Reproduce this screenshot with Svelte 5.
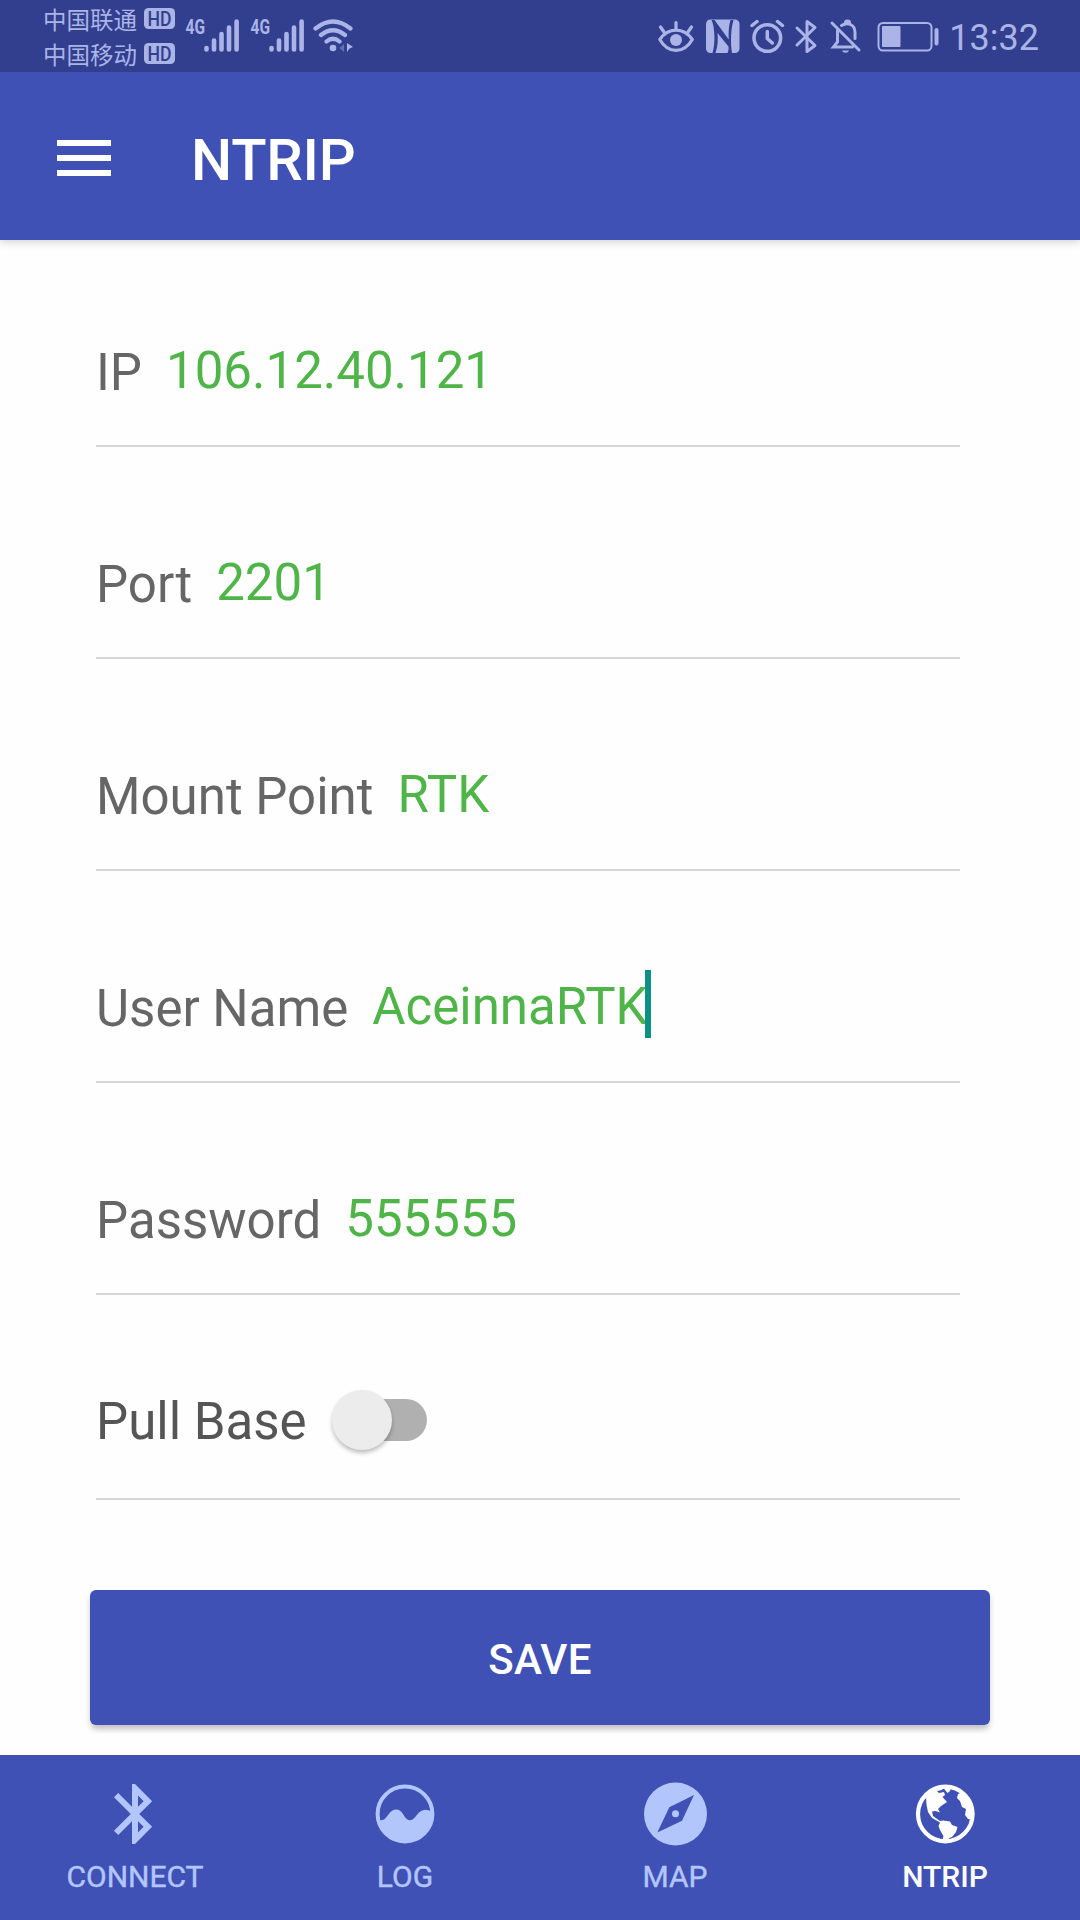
<script>
  const fields = [
    { label: 'IP', value: '106.12.40.121' },
    { label: 'Port', value: '2201' },
    { label: 'Mount Point', value: 'RTK' },
    { label: 'User Name', value: 'AceinnaRTK', focused: true },
    { label: 'Password', value: '555555' }
  ];
  const carriers = ['中国联通', '中国移动'];
  const tabs = ['CONNECT', 'LOG', 'MAP', 'NTRIP'];
  let active = $state('NTRIP');
</script>

<div class="screen">
  <div class="status">
    <div class="carriers">
      {#each carriers as name}
        <div class="carrier">
          <span>{name}</span>
          <svg class="hd" viewBox="0 0 31 21">
            <rect width="31" height="21" rx="4.5" fill="#aab4e6" />
            <text x="3.5" y="17.5" textLength="24" lengthAdjust="spacingAndGlyphs">HD</text>
          </svg>
        </div>
      {/each}
    </div>
    {#each [0, 1] as n}
      <svg class="signal" viewBox="185 16 56 40">
        <text x="185.5" y="34" textLength="19.5" lengthAdjust="spacingAndGlyphs">4G</text>
        <g stroke="#aab4e6" stroke-width="4.6" stroke-linecap="round">
          <path d="M206.5 48v1.5M214 40.5v9M221.5 34v15.5M229 27.5v22M236.6 21.5v28" />
        </g>
      </svg>
    {/each}
    <svg class="wifi" viewBox="311 16 44 40" fill="none" stroke="#aab4e6" stroke-width="4.2" stroke-linecap="round">
      <path d="M315.5 28.5Q333 14.5 350.5 28.5M321 35Q333 25.5 345 35M326.5 41.5Q333 36 339.5 41.5" />
      <circle cx="333" cy="48" r="3.3" fill="#aab4e6" stroke="none" />
      <path d="M344 44v8l-4.5-4z" fill="#6470b4" stroke="none" />
      <path d="M347 43l6 4-3.5 1.5-2.500 3.5z" fill="#aab4e6" stroke="none" />
    </svg>

    <div class="system">
      <svg class="eye" viewBox="657 16 38 40" fill="none" stroke="#aab4e6" stroke-width="3.2" stroke-linecap="round">
        <path d="M659.8 39.5C668 27 684 27 692.3 39.5C684 54 668 54 659.8 39.5Z" stroke-linejoin="round" />
        <path d="M676 22.500v6M660.5 27l3.5 5M691.5 27l-3.5 5" />
        <circle cx="676" cy="40" r="6" fill="#aab4e6" stroke="none" />
      </svg>
      <svg class="nfc" viewBox="704 16 38 40">
        <rect x="706" y="19.5" width="33.5" height="33.5" rx="4.5" fill="#aab4e6" />
        <path d="M711.500 20C715 27 715.500 44 712.500 53H715.500C718 46 718 39 717.500 33L728.500 46.500C728.800 49 728.500 51 727.500 53H732C730.500 44 730.500 30 733.500 20H730.500C728.500 26 728.500 33 728.700 39.500L714.500 20Z" fill="#323f8f" />
      </svg>
      <svg class="alarm" viewBox="748 16 38 40" fill="none" stroke="#aab4e6" stroke-width="3.5" stroke-linecap="round">
        <circle cx="767.3" cy="38" r="13.3" />
        <path d="M767.3 31.5v7l5 4.5M752 25.5l5-4M782.5 25.5l-5-4" />
      </svg>
      <svg class="bt" viewBox="793 16 28 40" fill="none" stroke="#aab4e6" stroke-width="3" stroke-linejoin="round">
        <path d="M797 28l18 17.500-8 6V21.500l8 6-18 17.500" stroke-linecap="round" />
      </svg>
      <svg class="bell" viewBox="829 16 34 40" fill="none" stroke="#aab4e6" stroke-width="3" stroke-linecap="round">
        <path d="M832 23l27 27M837.5 30v12l-4 5h19M841.5 25.500c6-4 13.500-1 13.500 7v6M845.500 22.500c0-2 4-2 4 0" />
        <path d="M842 50.500h7c-1.200 3-5.800 3-7 0z" fill="#aab4e6" stroke="none" />
      </svg>
      <svg class="battery" viewBox="876 16 64 40">
        <rect x="878.5" y="23" width="53" height="27.5" rx="4.5" fill="none" stroke="#aab4e6" stroke-width="2" />
        <rect x="882" y="26" width="18.5" height="21" rx="1" fill="#aab4e6" />
        <rect x="934.5" y="28" width="4" height="17.5" rx="2" fill="#aab4e6" />
      </svg>
      <span class="time">13:32</span>
    </div>
  </div>

  <header>
    <button class="menu" aria-label="Menu"><i></i><i></i><i></i></button>
    <h1>NTRIP</h1>
  </header>

  <main>
    {#each fields as f}
      <div class="row">
        <span class="label">{f.label}</span>
        <span class="value">{f.value}</span>
        {#if f.focused}<i class="caret"></i>{/if}
      </div>
    {/each}
    <div class="row toggle">
      <span class="label">Pull Base</span>
      <span class="switch"><i></i></span>
    </div>
    <button class="save">SAVE</button>
  </main>

  <nav>
    {#each tabs as tab}
      <button class:active={tab === active} onclick={() => (active = tab)}>
        <svg viewBox="0 0 72 72" fill="currentColor">
          {#if tab === 'CONNECT'}
            <path transform="scale(3)" d="M17.71 7.71L12 2h-1v7.59L6.41 5 5 6.41 10.59 12 5 17.59 6.41 19 11 14.41V22h1l5.71-5.71-4.3-4.29 4.3-4.29zM13 5.83l1.88 1.88L13 9.59V5.83zm1.88 10.46L13 18.17v-3.76l1.88 1.88z" />
          {:else if tab === 'LOG'}
            <circle cx="36" cy="36" r="27.4" fill="none" stroke="currentColor" stroke-width="4" />
            <path d="M9 41C14 44 16 41 19 37C24 30 30 30 34 36C38 43 42 45 47 38C52 31 57 30 63 34C63 51 51 64 36 64C21 64 9 54 9 41Z" />
          {:else if tab === 'MAP'}
            <path fill-rule="evenodd" d="M36.500 4.500a31.500 31.500 0 1 0 0 63a31.500 31.500 0 1 0 0-63zM55 17L43 42.700L18.300 54.500L30.300 29.300Z" />
            <circle cx="36.500" cy="35.800" r="3.5" />
          {:else}
            <circle cx="36.300" cy="36" r="27.300" fill="none" stroke="currentColor" stroke-width="4.200" />
            <path d="M17 19L25 12L34 9.500L33 12L28 13L30 15L35 14L36 17L33.500 19L38 24L32 28L29 31L31 34.500L26.500 33L23 33.500L24 38L31 43L34 42.500L41 43.500L43 47L48.500 49L47 54L43 59L40 60L39.500 64H33L34.500 58L31 52L29.500 48L31 44.500L23 40L19 34L17.500 27Z" />
            <path d="M34 9L42 9.500L41 13L38.500 15L36 12Z" />
            <path d="M49 16L53 14.500C61 21 65 30 63.500 42L59 41L56 37L57 31L53 29L51 23L48 20Z" />
          {/if}
        </svg>
        <span>{tab}</span>
      </button>
    {/each}
  </nav>
</div>

<style>
  :global(body) {
    background: #fff;
  }
  .screen {
    width: 1080px;
    height: 1920px;
    display: flex;
    flex-direction: column;
    overflow: hidden;
    background: #fefefe;
    font-family: Roboto, "Noto Sans CJK SC", sans-serif;
  }
  button {
    border: 0;
    padding: 0;
    background: none;
    font: inherit;
    color: inherit;
  }
  svg {
    display: block;
    flex: none;
  }
  .status {
    position: relative;
    z-index: 1;
    box-sizing: border-box;
    height: 72px;
    flex: none;
    display: flex;
    align-items: center;
    padding: 0 41px 0 43px;
    background: #323f8f;
    color: #aab4e6;
  }
  .carriers {
    width: 142px;
    display: flex;
    flex-direction: column;
    gap: 11px;
  }
  .carrier {
    display: flex;
    align-items: center;
    gap: 7px;
    height: 24px;
    font: 400 23.5px/24px "Noto Sans CJK SC", sans-serif;
  }
  .hd {
    width: 31px;
    height: 21px;
  }
  .hd text {
    font: 500 19.5px Roboto, sans-serif;
    fill: #323f8f;
  }
  .signal {
    width: 56px;
    height: 40px;
    margin-right: 9px;
  }
  .signal text {
    font: 700 20.5px Roboto, sans-serif;
    fill: #aab4e6;
  }
  .wifi {
    width: 44px;
    height: 40px;
    margin-left: -4px;
  }
  .system {
    display: flex;
    align-items: center;
    margin-left: auto;
  }
  .eye { width: 38px; height: 40px; margin-right: 9px; }
  .nfc { width: 38px; height: 40px; margin-right: 6px; }
  .alarm { width: 38px; height: 40px; margin-right: 7px; }
  .bt { width: 28px; height: 40px; margin-right: 8px; }
  .bell { width: 34px; height: 40px; margin-right: 13px; }
  .battery { width: 64px; height: 40px; margin-right: 9px; }
  .time {
    font-size: 36px;
    line-height: 40px;
    padding-top: 3px;
  }
  header {
    height: 168px;
    flex: none;
    display: flex;
    align-items: center;
    padding-left: 57px;
    background: #3f51b5;
    color: #fff;
    box-shadow: 0 1px 9px rgba(0, 0, 0, 0.22);
  }
  .menu {
    width: 54px;
    display: flex;
    flex-direction: column;
    gap: 9px;
    padding-top: 4px;
  }
  .menu i {
    height: 6px;
    background: #fff;
  }
  h1 {
    margin: 0 0 0 80px;
    padding-top: 8px;
    font-size: 58px;
    font-weight: 500;
    line-height: 70px;
    letter-spacing: -0.2px;
  }
  main {
    flex: 1;
    display: flex;
    flex-direction: column;
  }
  .row {
    box-sizing: border-box;
    height: 212px;
    flex: none;
    display: flex;
    align-items: center;
    margin: 0 120px 0 96px;
    padding-top: 61px;
    border-bottom: 2px solid #d6d6d6;
    font-size: 51px;
    line-height: 60px;
  }
  .row:first-child {
    height: 207px;
    padding-top: 56px;
  }
  .label {
    color: #666;
    padding-top: 5px;
  }
  .value {
    color: #4fb548;
    margin-left: 24px;
  }
  .caret {
    width: 6px;
    height: 68px;
    margin: 0 0 6px -3px;
    background: #0b9184;
  }
  .row.toggle {
    height: 205px;
    padding-top: 46px;
  }
  .toggle .label {
    color: #555;
    padding-top: 4px;
  }
  .switch {
    width: 86px;
    height: 42px;
    margin-left: 34px;
    border-radius: 21px;
    background: #b0b0b0;
    display: flex;
    align-items: center;
  }
  .switch i {
    flex: none;
    width: 60px;
    height: 60px;
    margin-left: -9px;
    border-radius: 50%;
    background: #ececec;
    box-shadow: 0 3px 4px rgba(0, 0, 0, 0.25);
  }
  .save {
    height: 135px;
    margin: 90px 90px 0;
    border-radius: 6px;
    background: #3f51b5;
    box-shadow: 0 5px 6px -1px rgba(0, 0, 0, 0.25);
    color: #fff;
    font-size: 42px;
    font-weight: 500;
    line-height: 50px;
    letter-spacing: 0.3px;
    padding-top: 4px;
  }
  nav {
    height: 165px;
    flex: none;
    display: grid;
    grid-template-columns: repeat(4, 1fr);
    background: #3f51b5;
  }
  nav button {
    display: flex;
    flex-direction: column;
    align-items: center;
    padding-top: 23px;
    color: #b3c6fb;
    font-size: 30px;
    font-weight: 400;
    line-height: 36px;
  }
  nav svg {
    width: 72px;
    height: 72px;
  }
  nav span {
    margin-top: 9px;
    /* thickens the regular weight a little without widening the labels */
    -webkit-text-stroke: 0.4px currentColor;
  }
  nav .active {
    color: #fff;
    font-weight: 500;
  }
  nav .active span {
    -webkit-text-stroke: 0;
  }
</style>
